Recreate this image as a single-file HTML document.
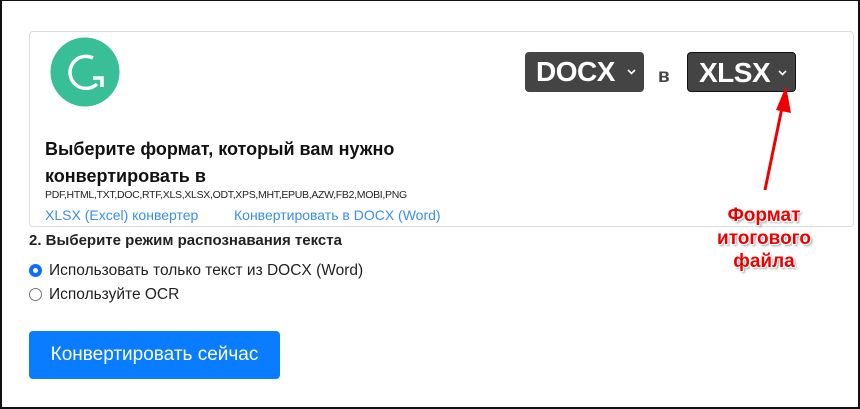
<!DOCTYPE html>
<html><head><meta charset="utf-8"><style>
*{box-sizing:border-box;margin:0;padding:0}
body{width:860px;height:409px;background:#fff;font-family:"Liberation Sans","DejaVu Sans",sans-serif;position:relative;overflow:hidden}
.frame{position:absolute;left:0;top:0;width:860px;height:409px;border:2px solid #111;border-top-width:1px}
.card{position:absolute;left:29px;top:31px;width:825px;height:196px;border:1px solid #d9dde2;border-radius:4px}
.abs{position:absolute;white-space:nowrap}
.sel{position:absolute;background:#444;color:#fff;font-weight:bold;font-size:28px;border-radius:4px;line-height:40px;padding-left:11px;letter-spacing:-0.5px}
.sel svg{position:absolute;right:8px;top:17px}
.radio{position:absolute;width:13px;height:13px;border-radius:50%;border:1px solid #777;background:#fff}
.red{color:#ee0000;font-weight:bold;font-size:19px;text-align:center;line-height:23px;text-shadow:1px 1px 0 #fff,-1px -1px 0 #fff,1px -1px 0 #fff,-1px 1px 0 #fff,2px 2px 2px #999}
</style></head><body>
<div class="frame"></div>
<div class="card"></div>
<svg class="abs" style="left:50px;top:37px" width="70" height="70" viewBox="0 0 70 70">
<circle cx="35" cy="35" r="34.5" fill="#38bf97"/>
<path d="M43 21 A16 16 0 1 0 47 47" fill="none" stroke="#fff" stroke-width="3.5"/>
<path d="M43 41 L52 41 L52 50" fill="none" stroke="#fff" stroke-width="3.5"/>
</svg>
<div class="abs" style="left:45px;top:136px;font-size:18px;font-weight:bold;line-height:27px;color:#111">Выберите формат, который вам нужно<br>конвертировать в</div>
<div class="abs" style="left:45px;top:189px;font-size:10.5px;letter-spacing:-0.3px;color:#222">PDF,HTML,TXT,DOC,RTF,XLS,XLSX,ODT,XPS,MHT,EPUB,AZW,FB2,MOBI,PNG</div>
<div class="abs" style="left:45px;top:207px;font-size:14px;color:#3a8ef0">XLSX (Excel) конвертер</div>
<div class="abs" style="left:234px;top:207px;font-size:14px;color:#3a8ef0">Конвертировать в DOCX (Word)</div>
<div class="sel" style="left:525px;top:52px;width:119px;height:40px">DOCX<svg width="9" height="6"><path d="M1 1 L4.5 4.5 L8 1" fill="none" stroke="#fff" stroke-width="1.6"/></svg></div>
<div class="abs" style="left:658px;top:66px;font-size:19px;font-weight:bold;color:#444">в</div>
<div class="sel" style="left:687px;top:52px;width:109px;height:40px;border:1px solid #111">XLSX<svg width="9" height="6"><path d="M1 1 L4.5 4.5 L8 1" fill="none" stroke="#fff" stroke-width="1.6"/></svg></div>
<svg class="abs" style="left:740px;top:80px" width="60" height="120"><path d="M25 110 L44 18" stroke="#e00" stroke-width="3"/><path d="M36 30 L46 6 L51 33 Z" fill="#e00"/></svg>
<div class="abs red" style="left:700px;top:204px;width:128px">Формат<br>итогового<br>файла</div>
<div class="abs" style="left:29px;top:232px;font-size:15px;font-weight:bold;color:#222">2. Выберите режим распознавания текста</div>
<div class="radio" style="left:29px;top:264px;border:4px solid #0d6efd"></div>
<div class="abs" style="left:49px;top:262px;font-size:15.5px;color:#222">Использовать только текст из DOCX (Word)</div>
<div class="radio" style="left:29px;top:288px"></div>
<div class="abs" style="left:49px;top:286px;font-size:15.5px;color:#222">Используйте OCR</div>
<div class="abs" style="left:29px;top:331px;width:251px;height:48px;background:#0a7cff;border-radius:4px;color:#fff;font-size:19px;line-height:48px;text-align:center">Конвертировать сейчас</div>
</body></html>
